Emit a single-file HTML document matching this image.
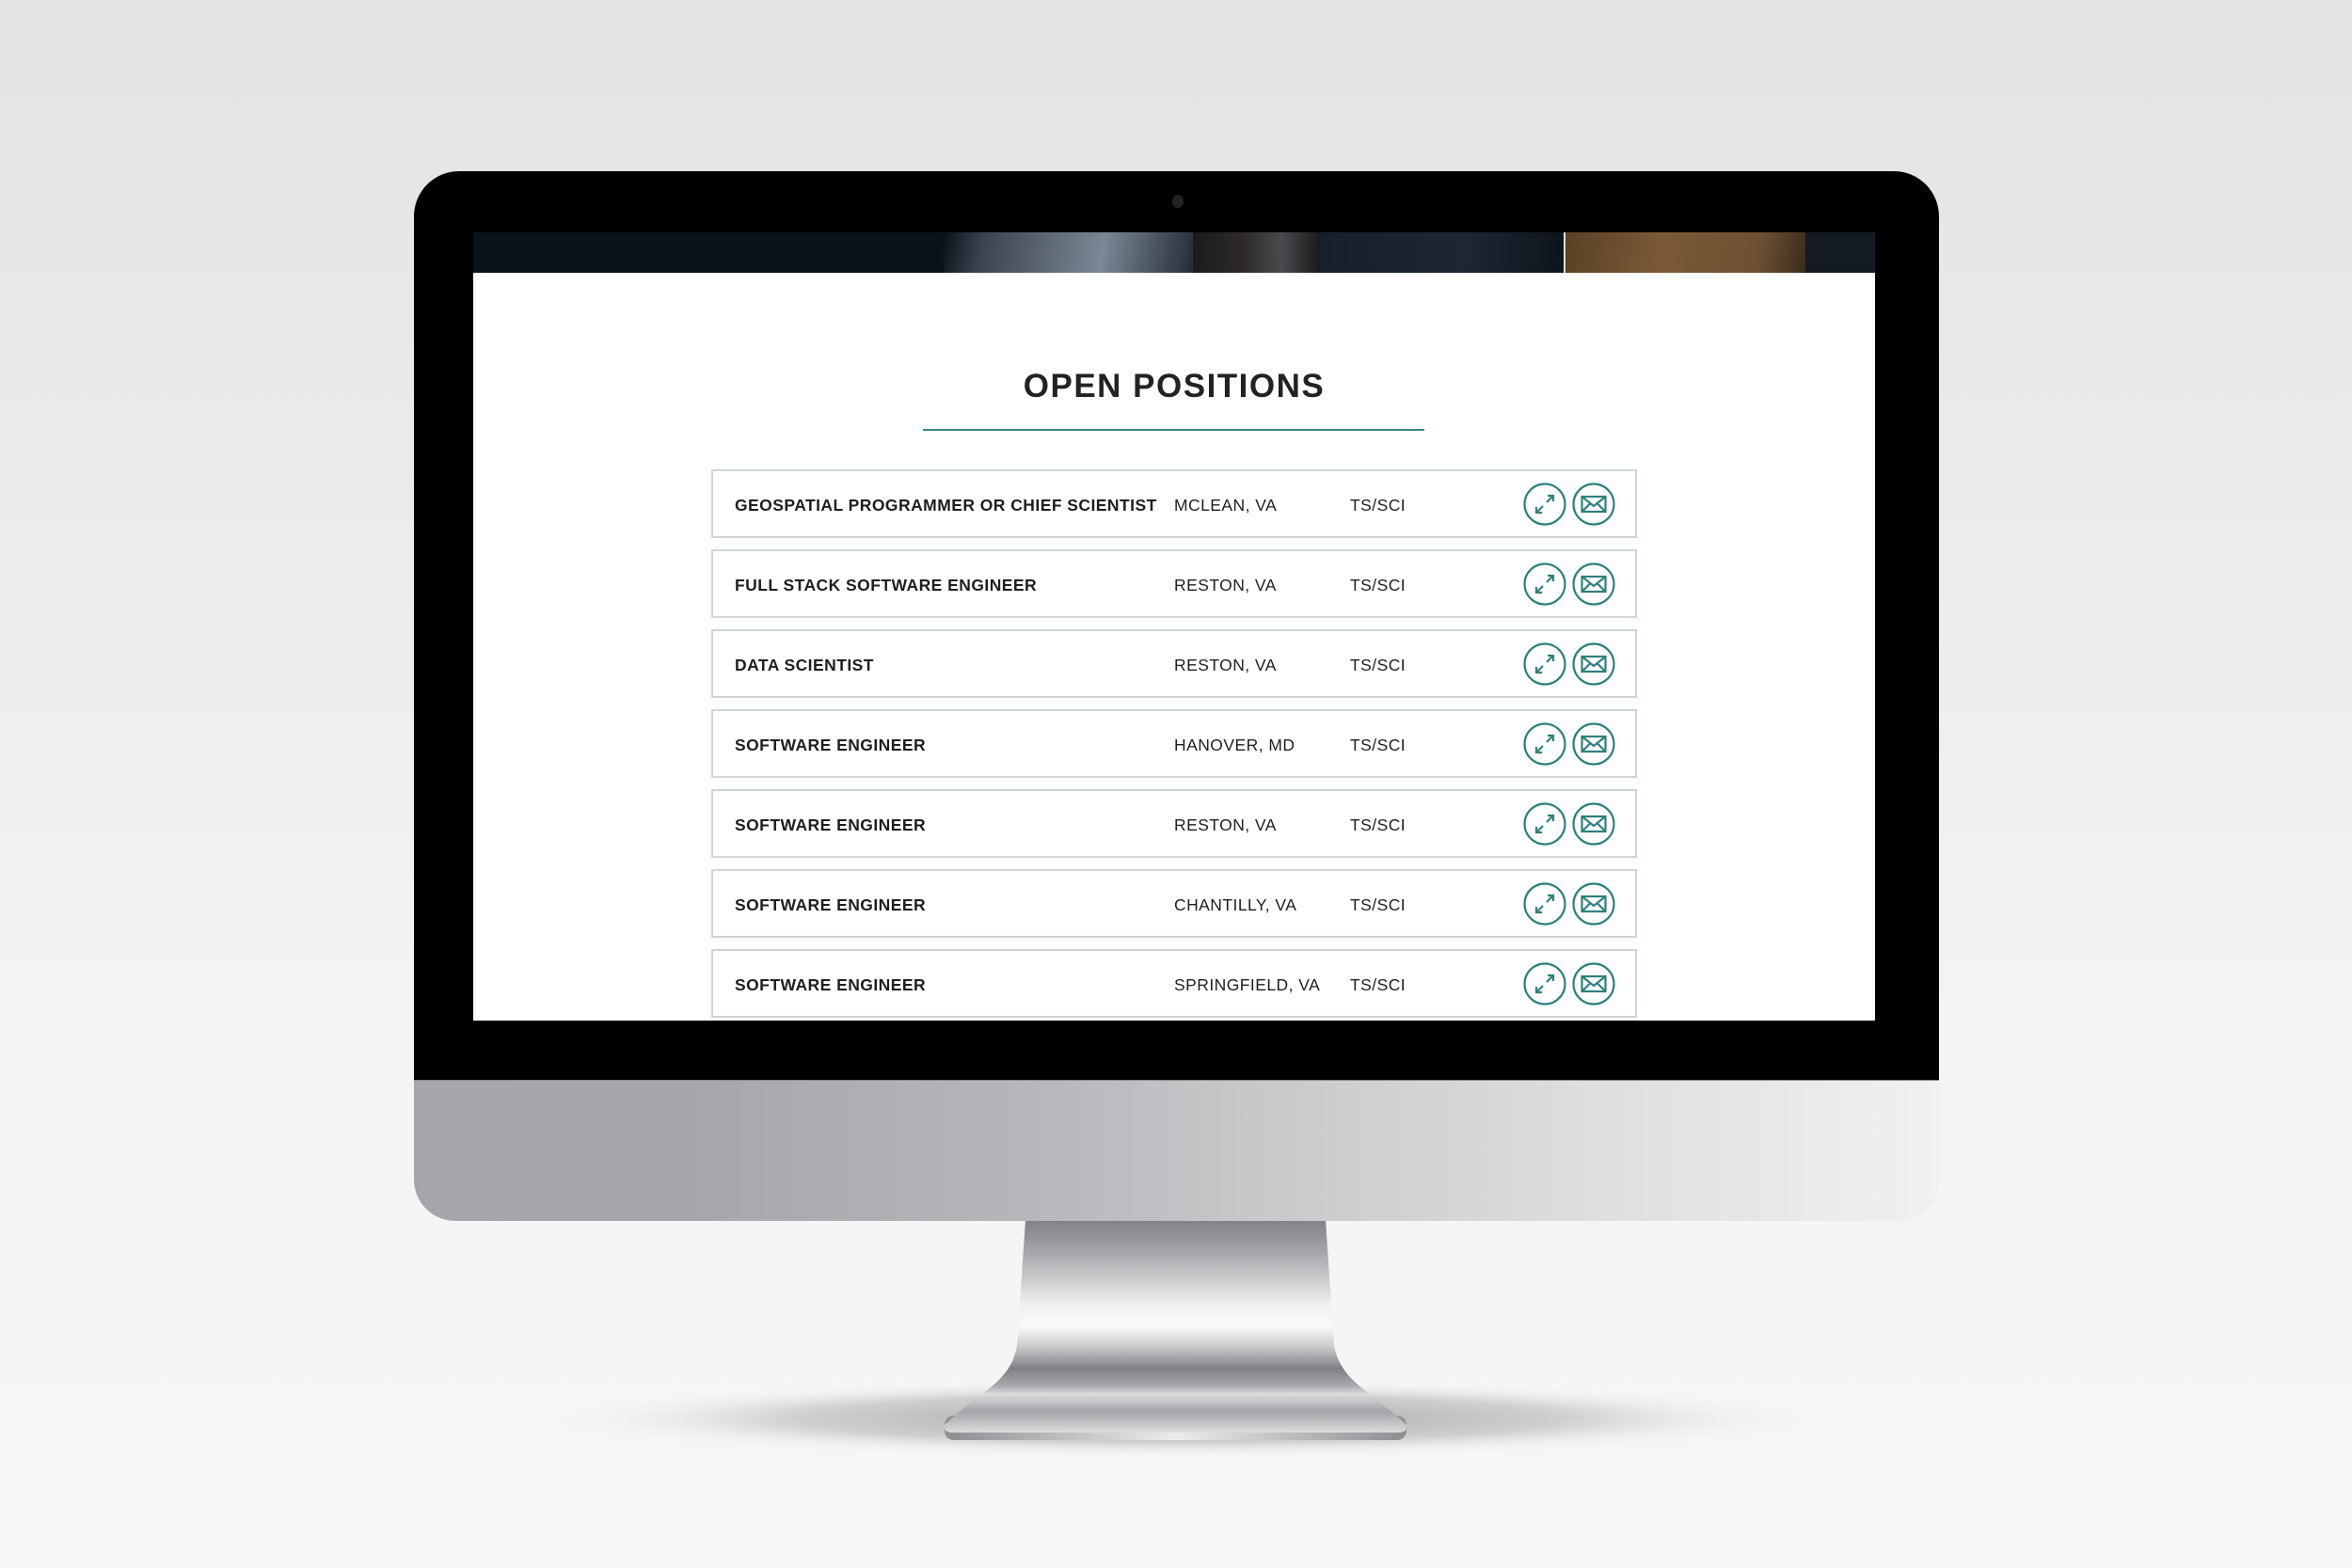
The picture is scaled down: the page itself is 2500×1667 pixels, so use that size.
<!DOCTYPE html>
<html><head><meta charset="utf-8">
<style>
html,body{margin:0;padding:0;}
body{width:2500px;height:1667px;position:relative;overflow:hidden;
background:linear-gradient(#e3e3e3 0px,#ececec 600px,#f4f4f4 1100px,#f6f6f6 1667px);
font-family:"Liberation Sans",sans-serif;}
.abs{position:absolute;}
#bezel{left:440px;top:182px;width:1621px;height:966px;background:#000;border-radius:48px 48px 0 0;}
#chin{left:440px;top:1148px;width:1621px;height:149px;border-radius:0 0 44px 44px;
background:linear-gradient(90deg,#a5a6ab 0%,#a6a7ac 18%,#b5b6ba 40%,#c8c8cb 55%,#dcdcde 75%,#f1f1f1 100%);
border-top:1px solid #888;}
#screen{left:503px;top:247px;width:1490px;height:838px;background:#fff;overflow:hidden;}
#photo{left:0;top:0;width:1490px;height:43px;background:#0b121b;overflow:hidden;}
h1{position:absolute;left:0;width:1490px;top:144px;margin:0;text-align:center;font-size:35px;font-weight:bold;color:#222;letter-spacing:1.5px;}
#ul{left:478px;top:209px;width:533px;height:2px;background:#3a8684;}
.row{position:absolute;left:253px;width:980px;height:69px;border:2px solid #cdd6d4;}
.row span{position:absolute;top:26px;font-size:17.5px;color:#1e1e1e;letter-spacing:0.45px;white-space:nowrap;line-height:20px;}
.t{left:23px;font-weight:bold;}
.l{left:490px;}
.c{left:677px;}
.row svg{position:absolute;left:860px;top:11px;}
</style></head><body>
<svg class="abs" style="left:0;top:0" width="2500" height="1667">
<defs>
<radialGradient id="sh" cx="50%" cy="50%" r="50%">
<stop offset="0" stop-color="#9a9a9a" stop-opacity="0.9"/>
<stop offset="0.6" stop-color="#b5b5b5" stop-opacity="0.6"/>
<stop offset="1" stop-color="#f6f6f6" stop-opacity="0"/>
</radialGradient>
<linearGradient id="neck" x1="0" y1="0" x2="0" y2="1">
<stop offset="0" stop-color="#818287"/>
<stop offset="0.15" stop-color="#a4a5a9"/>
<stop offset="0.4" stop-color="#f0f0f0"/>
<stop offset="0.5" stop-color="#fafafa"/>
<stop offset="0.6" stop-color="#c8c8cb"/>
<stop offset="0.7" stop-color="#7e7f84"/>
<stop offset="0.78" stop-color="#a9aaae"/>
<stop offset="0.82" stop-color="#dcdcde"/>
<stop offset="0.9" stop-color="#a3a4a8"/>
<stop offset="1" stop-color="#dcdcde"/>
</linearGradient>
<linearGradient id="foot" x1="0" y1="0" x2="1" y2="0">
<stop offset="0" stop-color="#8d8e92"/>
<stop offset="0.5" stop-color="#ececec"/>
<stop offset="1" stop-color="#8d8e92"/>
</linearGradient>
</defs>
<ellipse cx="1255" cy="1508" rx="680" ry="42" fill="url(#sh)"/>
<rect x="1004" y="1505" width="491" height="26" rx="10" fill="url(#foot)"/>
<path d="M1090 1297 L1409 1297 L1418 1430 C1425 1470 1460 1480 1495 1515 L1495 1518 Q1495 1523 1485 1523 L1014 1523 Q1004 1523 1004 1518 L1004 1515 C1040 1480 1075 1470 1081 1430 Z" fill="url(#neck)"/>
</svg>
<div id="bezel" class="abs">
<div class="abs" style="left:806px;top:25px;width:12px;height:14px;border-radius:50%;background:#222;"></div>
</div>
<div id="chin" class="abs"></div>
<div id="screen" class="abs">
<div id="photo" class="abs">
<div class="abs" style="left:500px;top:0;width:280px;height:43px;background:linear-gradient(100deg,#0b121b 0%,#3a4350 15%,#66717e 45%,#7b8794 60%,#3c4653 85%,#1a1f26 100%);"></div>
<div class="abs" style="left:765px;top:0;width:135px;height:43px;background:linear-gradient(90deg,#1b1a1c 0%,#2e2a2a 40%,#4a4a4e 70%,#1a1a1c 100%);"></div>
<div class="abs" style="left:900px;top:0;width:260px;height:43px;background:linear-gradient(90deg,#16202b,#1c2733 60%,#0d141c);"></div>
<div class="abs" style="left:1159px;top:0;width:2px;height:43px;background:#ddd;"></div>
<div class="abs" style="left:1161px;top:0;width:255px;height:43px;background:linear-gradient(100deg,#5a4025 0%,#7a5a36 40%,#6c5031 80%,#3a2c1e 100%);"></div>
<div class="abs" style="left:1416px;top:0;width:74px;height:43px;background:#141a22;"></div>
</div>
<h1>OPEN POSITIONS</h1>
<div id="ul" class="abs"></div>

<div class="row" style="top:252px"><span class="t">GEOSPATIAL PROGRAMMER OR CHIEF SCIENTIST</span><span class="l">MCLEAN, VA</span><span class="c">TS/SCI</span><svg width="100" height="48"><use href="#ic"/></svg></div>
<div class="row" style="top:337px"><span class="t">FULL STACK SOFTWARE ENGINEER</span><span class="l">RESTON, VA</span><span class="c">TS/SCI</span><svg width="100" height="48"><use href="#ic"/></svg></div>
<div class="row" style="top:422px"><span class="t">DATA SCIENTIST</span><span class="l">RESTON, VA</span><span class="c">TS/SCI</span><svg width="100" height="48"><use href="#ic"/></svg></div>
<div class="row" style="top:507px"><span class="t">SOFTWARE ENGINEER</span><span class="l">HANOVER, MD</span><span class="c">TS/SCI</span><svg width="100" height="48"><use href="#ic"/></svg></div>
<div class="row" style="top:592px"><span class="t">SOFTWARE ENGINEER</span><span class="l">RESTON, VA</span><span class="c">TS/SCI</span><svg width="100" height="48"><use href="#ic"/></svg></div>
<div class="row" style="top:677px"><span class="t">SOFTWARE ENGINEER</span><span class="l">CHANTILLY, VA</span><span class="c">TS/SCI</span><svg width="100" height="48"><use href="#ic"/></svg></div>
<div class="row" style="top:762px"><span class="t">SOFTWARE ENGINEER</span><span class="l">SPRINGFIELD, VA</span><span class="c">TS/SCI</span><svg width="100" height="48"><use href="#ic"/></svg></div>
</div>
<svg width="0" height="0" style="position:absolute">
<defs>
<g id="ic" fill="none" stroke="#2e807d" stroke-width="2.2">
<circle cx="24" cy="24" r="21.5"/>
<path d="M26 22 L33 15 M27 15 L33 15 L33 21 M22 26 L15 33 M15 27 L15 33 L21 33"/>
<circle cx="76" cy="24" r="21.5"/>
<rect x="63.5" y="16" width="25" height="16"/>
<path d="M63.5 16 L76 26 L88.5 16 M63.5 32 L72 23.5 M88.5 32 L80 23.5"/>
</g>
</defs>
</svg>
</body></html>
